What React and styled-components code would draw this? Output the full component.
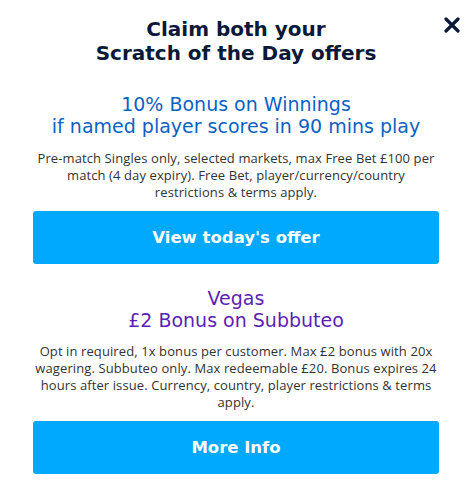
import styled, { createGlobalStyle } from "styled-components";

const GlobalStyle = createGlobalStyle`
    html, body {
        margin: 0;
        padding: 0;
        background: #ffffff;
    }
    body {
        font-family: "Open Sans", "Noto Sans", sans-serif;
    }
`;

const Modal = styled.div`
    position: relative;
    width: 468px;
    height: 485px;
    box-sizing: border-box;
    padding: 17px 29px 0 33px;
    display: flex;
    flex-direction: column;
    align-items: stretch;
    text-align: center;
    background: #ffffff;
`;

const CloseButton = styled.button`
    position: absolute;
    top: 15px;
    right: 5px;
    width: 22px;
    height: 20px;
    padding: 0;
    border: none;
    background: none;
    cursor: pointer;
    display: flex;
    align-items: center;
    justify-content: center;
`;

const Title = styled.h1`
    margin: 0;
    font-family: "DejaVu Sans", sans-serif;
    font-size: 20px;
    line-height: 24px;
    font-weight: 700;
    color: #0b1838;
`;

const Offer = styled.h2`
    margin: ${(p) => p.$top}px 0 0;
    font-family: "DejaVu Sans", sans-serif;
    font-size: 19px;
    line-height: 22px;
    font-weight: 400;
    color: ${(p) => p.$color};
`;

const Terms = styled.p`
    margin: ${(p) => p.$top}px 0 0;
    padding: 0 2px;
    font-size: 13px;
    line-height: 17px;
    letter-spacing: 0.1px;
    color: #333333;
`;

const CtaButton = styled.button`
    margin-top: ${(p) => p.$top}px;
    height: 53px;
    width: 100%;
    border: none;
    border-radius: 3px;
    background: #00a9fd;
    color: #ffffff;
    font-family: "DejaVu Sans", sans-serif;
    font-size: 16.5px;
    font-weight: 700;
    cursor: pointer;
`;

const App = () => {
    return (
        <Modal>
            <GlobalStyle />
            <CloseButton aria-label="Close">
                <svg width="16" height="16" viewBox="0 0 16 16">
                    <path
                        d="M2 2 L14 14 M14 2 L2 14"
                        stroke="#0b1838"
                        strokeWidth="3.2"
                        strokeLinecap="round"
                    />
                </svg>
            </CloseButton>
            <Title>
                Claim both your
                <br />
                Scratch of the Day offers
            </Title>
            <Offer $top={28} $color="#0a62c4">
                10% Bonus on Winnings
                <br />
                if named player scores in 90 mins play
            </Offer>
            <Terms $top={13}>
                Pre-match Singles only, selected markets, max Free Bet £100 per
                match (4 day expiry). Free Bet, player/currency/country
                restrictions &amp; terms apply.
            </Terms>
            <CtaButton $top={10}>View today's offer</CtaButton>
            <Offer $top={23} $color="#5c1fb5">
                Vegas
                <br />
                £2 Bonus on Subbuteo
            </Offer>
            <Terms $top={12}>
                Opt in required, 1x bonus per customer. Max £2 bonus with 20x
                wagering. Subbuteo only. Max redeemable £20. Bonus expires 24
                hours after issue. Currency, country, player restrictions &amp;
                terms apply.
            </Terms>
            <CtaButton $top={10}>More Info</CtaButton>
        </Modal>
    );
};

export default App;
